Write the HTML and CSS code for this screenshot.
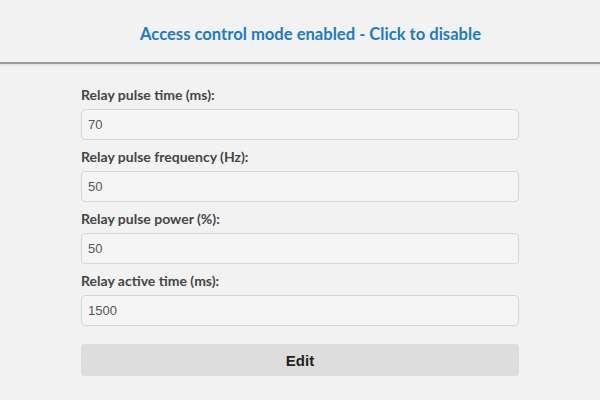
FILE: index.html
```html
<!DOCTYPE html>
<html>
<head>
	<title>Relay settings</title>
	<meta name="viewport" content="width=device-width, initial-scale=1.0">
	<link rel="stylesheet" href="styles.css">
</head>
<body>
  <div class="header">
  	<a class="mode">Access control mode enabled - Click to disable</a>
  </div>
  <form class="settings">
  	<label>Relay pulse time (ms):</label>
  	<input type="text" value="70">

  	<label>Relay pulse frequency (Hz):</label>
  	<input type="text" value="50">

  	<label>Relay pulse power (%):</label>
  	<input type="text" value="50">

  	<label>Relay active time (ms):</label>
  	<input type="text" value="1500">

  	<button type="button">Edit</button>
  </form>
</body>
</html>
```

FILE: styles.css
```css
*{
	box-sizing: border-box;
}
body{
	margin: 0;
	background: #f2f2f2;
	font-family: Lato, sans-serif;
}
.header{
	height: 64px;
	display: flex;
	justify-content: center;
	align-items: center;
	padding-top: 6px;
	padding-left: 21px;
	border-bottom: 2px solid #9a9a9a;
	box-shadow: 0 2px 0 #e4e4e4;
}
.mode{
	color: #1f7bbf;
	font-size: 16.6px;
	font-weight: bold;
	cursor: pointer;
}
.settings{
	width: 438px;
	margin: 0 auto;
	padding-top: 21px;
	display: flex;
	flex-direction: column;
}
.settings label{
	color: #454545;
	font-size: 14px;
	font-weight: bold;
	height: 24px;
	padding-top: 1px;
}
.settings input{
	height: 31px;
	margin-bottom: 7px;
	padding: 0 6px;
	background: #f5f5f5;
	border: 1px solid #d6d6d6;
	border-radius: 4px;
	font-family: "Liberation Sans", Arial, sans-serif;
	font-size: 13px;
	color: #555;
	outline: none;
}
.settings button{
	margin-top: 11px;
	height: 32px;
	background: #dddddd;
	border: 0;
	border-radius: 4px;
	font-family: "Liberation Sans", Arial, sans-serif;
	font-size: 15px;
	font-weight: bold;
	color: #222;
}
```
